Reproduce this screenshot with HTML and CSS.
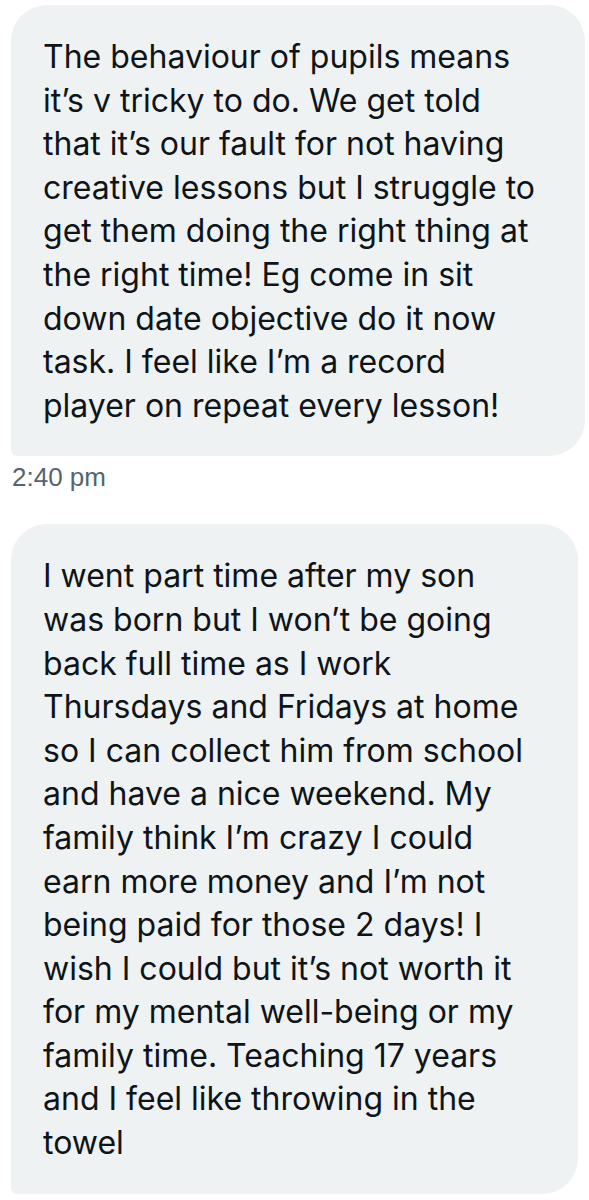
FILE: index.html
```html
<!DOCTYPE html>
<html lang="en">
<head>
<meta charset="utf-8">
<title>Messages</title>
<link rel="stylesheet" href="styles.css">
</head>
<body>
<main class="thread">
  <div class="bubble bubble-a">
    <p class="text">The behaviour of pupils means<br>it’s v tricky to do. We get told<br>that it’s our fault for not having<br>creative lessons but I struggle to<br>get them doing the right thing at<br>the right time! Eg come in sit<br>down date objective do it now<br>task. I feel like I’m a record<br>player on repeat every lesson!</p>
  </div>
  <div class="time">2:40 pm</div>
  <div class="bubble bubble-b">
    <p class="text">I went part time after my son<br>was born but I won’t be going<br>back full time as I work<br>Thursdays and Fridays at home<br>so I can collect him from school<br>and have a nice weekend. My<br>family think I’m crazy I could<br>earn more money and I’m not<br>being paid for those 2 days! I<br>wish I could but it’s not worth it<br>for my mental well-being or my<br>family time. Teaching 17 years<br>and I feel like throwing in the<br>towel</p>
  </div>
</main>
</body>
</html>
```

FILE: styles.css
```css
html, body {
  margin: 0;
  padding: 0;
  background: #ffffff;
}

.thread {
  display: flex;
  flex-direction: column;
  align-items: flex-start;
  padding: 5px 0 0 11px;
}

.bubble {
  box-sizing: border-box;
  background: #eef2f3;
  border-radius: 36px 36px 36px 6px;
  padding: 30px 16px 29px 32px;
}

.bubble-a {
  width: 574px;
}

.bubble-b {
  width: 567px;
  margin-top: 32px;
}

.text {
  margin: 0;
  font-family: "Inter", "Noto Sans", sans-serif;
  font-size: 32px;
  line-height: 43.6px;
  color: #0f1419;
  white-space: nowrap;
}

.time {
  margin-top: 6px;
  margin-left: 1px;
  font-family: "Liberation Sans", Arial, sans-serif;
  font-size: 26px;
  line-height: 30px;
  color: #536471;
}
```
